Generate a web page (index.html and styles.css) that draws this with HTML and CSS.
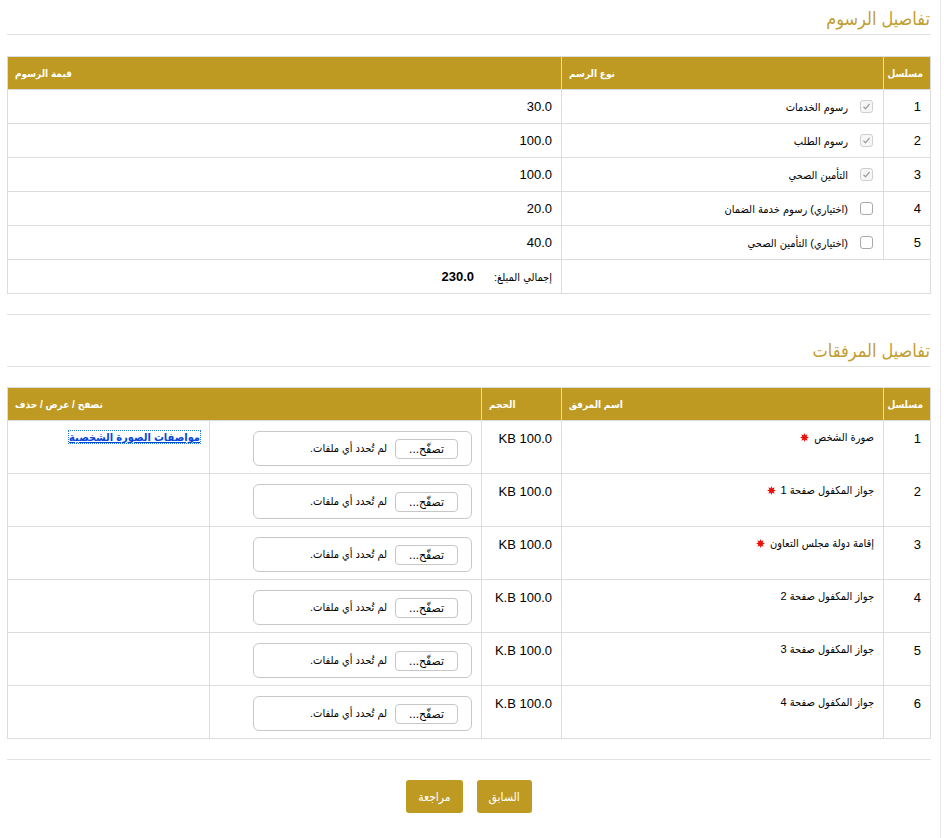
FILE: index.html
```html
<!DOCTYPE html>
<html lang="ar" dir="rtl">
<head>
    <meta charset="UTF-8">
    <meta name="viewport" content="width=device-width, initial-scale=1.0">
    <title>تفاصيل الرسوم والمرفقات</title>
    <link rel="stylesheet" href="styles.css">
</head>
<body>
    <div class="page">
        <h2 class="section-title first">تفاصيل الرسوم</h2>
        <table class="grid fees">
            <colgroup>
                <col class="col-serial">
                <col class="col-name">
                <col>
            </colgroup>
            <thead>
                <tr>
                    <th>مسلسل</th>
                    <th>نوع الرسم</th>
                    <th>قيمة الرسوم</th>
                </tr>
            </thead>
            <tbody>
                <tr>
                    <td>1</td>
                    <td><span class="cb checked"></span>رسوم الخدمات</td>
                    <td>30.0</td>
                </tr>
                <tr>
                    <td>2</td>
                    <td><span class="cb checked"></span>رسوم الطلب</td>
                    <td>100.0</td>
                </tr>
                <tr>
                    <td>3</td>
                    <td><span class="cb checked"></span>التأمين الصحي</td>
                    <td>100.0</td>
                </tr>
                <tr>
                    <td>4</td>
                    <td><span class="cb"></span>(اختياري) رسوم خدمة الضمان</td>
                    <td>20.0</td>
                </tr>
                <tr>
                    <td>5</td>
                    <td><span class="cb"></span>(اختياري) التأمين الصحي</td>
                    <td>40.0</td>
                </tr>
                <tr class="total">
                    <td colspan="2"></td>
                    <td><span class="total-label">إجمالي المبلغ:</span><strong>230.0</strong></td>
                </tr>
            </tbody>
        </table>

        <hr class="divider">

        <h2 class="section-title">تفاصيل المرفقات</h2>
        <table class="grid files">
            <colgroup>
                <col class="col-serial">
                <col class="col-name">
                <col class="col-size">
                <col class="col-file">
                <col>
            </colgroup>
            <thead>
                <tr>
                    <th>مسلسل</th>
                    <th>اسم المرفق</th>
                    <th>الحجم</th>
                    <th colspan="2">تصفح / عرض / حذف</th>
                </tr>
            </thead>
            <tbody>
                <tr>
                    <td>1</td>
                    <td>صورة الشخص <svg class="req" viewBox="0 0 10 10"><path d="M5 0 6 2.6 8.5 1.5 7.4 4 10 5 7.4 6 8.5 8.5 6 7.4 5 10 4 7.4 1.5 8.5 2.6 6 0 5 2.6 4 1.5 1.5 4 2.6Z"/></svg></td>
                    <td><span dir="ltr">KB 100.0</span></td>
                    <td><div class="file-box"><span class="file-btn">تصفّح...</span><span class="file-text">لم تُحدد أي ملفات.</span></div></td>
                    <td><a href="#" class="spec-link">مواصفات الصورة الشخصية</a></td>
                </tr>
                <tr>
                    <td>2</td>
                    <td>جواز المكفول صفحة 1 <svg class="req" viewBox="0 0 10 10"><path d="M5 0 6 2.6 8.5 1.5 7.4 4 10 5 7.4 6 8.5 8.5 6 7.4 5 10 4 7.4 1.5 8.5 2.6 6 0 5 2.6 4 1.5 1.5 4 2.6Z"/></svg></td>
                    <td><span dir="ltr">KB 100.0</span></td>
                    <td><div class="file-box"><span class="file-btn">تصفّح...</span><span class="file-text">لم تُحدد أي ملفات.</span></div></td>
                    <td></td>
                </tr>
                <tr>
                    <td>3</td>
                    <td>إقامة دولة مجلس التعاون <svg class="req" viewBox="0 0 10 10"><path d="M5 0 6 2.6 8.5 1.5 7.4 4 10 5 7.4 6 8.5 8.5 6 7.4 5 10 4 7.4 1.5 8.5 2.6 6 0 5 2.6 4 1.5 1.5 4 2.6Z"/></svg></td>
                    <td><span dir="ltr">KB 100.0</span></td>
                    <td><div class="file-box"><span class="file-btn">تصفّح...</span><span class="file-text">لم تُحدد أي ملفات.</span></div></td>
                    <td></td>
                </tr>
                <tr>
                    <td>4</td>
                    <td>جواز المكفول صفحة 2</td>
                    <td><span dir="ltr">K.B 100.0</span></td>
                    <td><div class="file-box"><span class="file-btn">تصفّح...</span><span class="file-text">لم تُحدد أي ملفات.</span></div></td>
                    <td></td>
                </tr>
                <tr>
                    <td>5</td>
                    <td>جواز المكفول صفحة 3</td>
                    <td><span dir="ltr">K.B 100.0</span></td>
                    <td><div class="file-box"><span class="file-btn">تصفّح...</span><span class="file-text">لم تُحدد أي ملفات.</span></div></td>
                    <td></td>
                </tr>
                <tr>
                    <td>6</td>
                    <td>جواز المكفول صفحة 4</td>
                    <td><span dir="ltr">K.B 100.0</span></td>
                    <td><div class="file-box"><span class="file-btn">تصفّح...</span><span class="file-text">لم تُحدد أي ملفات.</span></div></td>
                    <td></td>
                </tr>
            </tbody>
        </table>

        <div class="actions">
            <button class="btn">السابق</button>
            <button class="btn">مراجعة</button>
        </div>
    </div>
</body>
</html>
```

FILE: styles.css
```css
body {
    margin: 0;
    background: #fff;
    color: #000;
    font-family: "Liberation Sans", "DejaVu Sans Condensed", "DejaVu Sans", sans-serif;
    font-size: 11px;
}

.page {
    width: 941px;
    min-height: 838px;
    box-sizing: border-box;
    margin: 0 auto 0 0;
    padding: 0 9px 0 7px;
    border-right: 1px solid #e6e6e6;
}

.section-title {
    margin: 17px 0 20px;
    padding: 6px 1px 2px 0;
    line-height: 26px;
    font-size: 18px;
    font-weight: normal;
    color: #c29e2f;
    border-bottom: 1px solid #e2e2e2;
}

.section-title.first {
    margin-top: 0;
    margin-bottom: 21px;
}

.divider {
    border: none;
    border-top: 1px solid #e2e2e2;
    margin: 20px 0 0;
}

.grid {
    width: 100%;
    table-layout: fixed;
    border-collapse: collapse;
    border: 1px solid #dcdcdc;
}

.grid th {
    background: #bf9a22;
    color: #fff;
    font-size: 10px;
    font-weight: bold;
    text-align: left;
    height: 32px;
    padding: 0 7px;
    border: 1px solid #dcdcdc;
    white-space: nowrap;
}

.grid td {
    border: 1px solid #dcdcdc;
    padding: 0 9px;
    text-align: right;
}

.col-serial { width: 47px; }
.col-name { width: 322px; }
.col-size { width: 80px; }
.col-file { width: 272px; }

.fees td {
    height: 33px;
    vertical-align: middle;
}

.fees td:first-child,
.fees td:last-child {
    font-size: 13px;
}

.cb {
    display: inline-block;
    width: 11px;
    height: 11px;
    border: 1px solid #a9a9a9;
    border-radius: 3px;
    margin: 0 1px 0 12px;
    vertical-align: -2px;
    background: #fff;
}

.cb.checked {
    border-color: #cfcfcf;
    background: #f6f6f6 url("data:image/svg+xml,%3Csvg xmlns='http://www.w3.org/2000/svg' viewBox='0 0 11 11'%3E%3Cpath d='M2.5 5.8 4.5 7.8 8.5 3' fill='none' stroke='%23a0a0a0' stroke-width='1.3'/%3E%3C/svg%3E") no-repeat center;
}

.total td:last-child {
    font-size: 11px;
}

.total-label {
    margin-left: 20px;
}

.total strong {
    font-size: 13px;
}

.files td {
    height: 42px;
    vertical-align: top;
    padding-top: 10px;
    padding-bottom: 0;
}

.files td:first-child,
.files td:nth-child(3) {
    font-size: 13px;
}

.files td:nth-child(4) {
    padding: 10px 9px 0;
}

.req {
    width: 9px;
    height: 9px;
    fill: #e8140c;
    vertical-align: -1px;
    margin-right: 2px;
}

.file-box {
    width: 219px;
    height: 35px;
    box-sizing: border-box;
    border: 1px solid #c8c8c8;
    border-radius: 6px;
    display: flex;
    align-items: center;
    gap: 8px;
    padding: 0 13px 0 0;
    margin-left: auto;
    font-size: 11px;
}

.file-btn {
    width: 61px;
    height: 18px;
    border: 1px solid #c6c6c6;
    border-radius: 4px;
    display: flex;
    align-items: center;
    justify-content: center;
    background: #fff;
    font-size: 12px;
}

.spec-link {
    color: #0645d8;
    font-size: 11px;
    font-weight: bold;
    text-decoration: underline;
    outline: 1px dotted #1f7ae0;
}

.actions {
    margin-top: 20px;
    padding-top: 20px;
    border-top: 1px solid #e2e2e2;
    display: flex;
    justify-content: center;
    gap: 14px;
}

.btn {
    background: #bf9a22;
    color: #fff;
    border: none;
    border-radius: 3px;
    height: 33px;
    padding: 0 12px;
    font-family: inherit;
    font-size: 12px;
    cursor: pointer;
}
```
